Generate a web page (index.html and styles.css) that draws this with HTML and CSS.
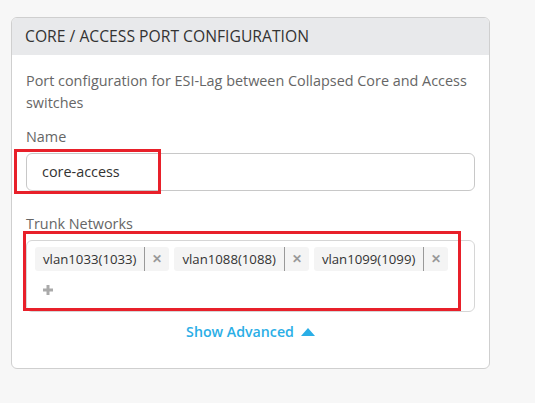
FILE: index.html
```html
<!DOCTYPE html>
<html>
<head>
<meta charset="utf-8">
<link rel="stylesheet" href="styles.css">
</head>
<body>
<div class="card">
  <div class="card-header">CORE / ACCESS PORT CONFIGURATION</div>
  <div class="card-body">
    <p class="desc">Port configuration for ESI-Lag between Collapsed Core and Access switches</p>
    <div class="field">
      <label class="label">Name</label>
      <div class="input-wrap">
        <div class="input">core-access</div>
        <div class="annot annot-name"></div>
      </div>
    </div>
    <div class="field field-trunk">
      <label class="label">Trunk Networks</label>
      <div class="input-wrap">
        <div class="tagbox">
          <div class="tags">
            <span class="tag"><span class="tag-text">vlan1033(1033)</span><span class="tag-x">&#x2715;</span></span>
            <span class="tag"><span class="tag-text">vlan1088(1088)</span><span class="tag-x">&#x2715;</span></span>
            <span class="tag"><span class="tag-text">vlan1099(1099)</span><span class="tag-x">&#x2715;</span></span>
          </div>
          <div class="add">
            <svg width="12" height="12" viewBox="0 0 12 12"><path d="M6 1v10M1 6h10" stroke="#aaa" stroke-width="3"/></svg>
          </div>
        </div>
        <div class="annot annot-trunk"></div>
      </div>
    </div>
    <div class="advanced">
      <span class="adv-link">Show Advanced</span>
      <svg class="adv-caret" width="14" height="8" viewBox="0 0 14 8"><path d="M0 8L7 0L14 8Z" fill="#2aaee6"/></svg>
    </div>
  </div>
</div>
</body>
</html>
```
FILE: styles.css
```css
html, body {
  margin: 0;
  padding: 0;
  background: #f7f7f7;
  font-family: "Open Sans", "Liberation Sans", sans-serif;
}
body {
  padding: 17px 0 0 11px;
}
.card {
  width: 477px;
  border: 1px solid #cfcfcf;
  border-radius: 6px;
  background: #fff;
  overflow: hidden;
}
.card-header {
  background: #e8e9eb;
  height: 37px;
  line-height: 36px;
  padding: 0 13px;
  font-size: 15.7px;
  color: #333;
}
.card-body {
  padding: 15px 14px 26px 14px;
}
.desc {
  margin: 0;
  font-size: 14.4px;
  line-height: 22px;
  color: #666;
}
.field {
  margin-top: 13px;
}
.field-trunk {
  margin-top: 23px;
}
.label {
  display: block;
  font-size: 14.4px;
  line-height: 20px;
  color: #666;
  margin-bottom: 6px;
}
.input-wrap {
  position: relative;
}
.input {
  height: 36px;
  border: 1px solid #c8c8c8;
  border-radius: 6px;
  padding: 0 15px;
  line-height: 36px;
  font-size: 14.4px;
  color: #333;
}
.annot {
  position: absolute;
  border: 3px solid #e8202a;
  box-sizing: border-box;
  pointer-events: none;
}
.annot-name {
  left: -12px;
  top: -4px;
  width: 147px;
  height: 45px;
}
.annot-trunk {
  left: -3px;
  top: -9px;
  width: 438px;
  height: 80px;
}
.tagbox {
  border: 1px solid #d6d6d6;
  border-radius: 6px;
  padding: 6px 8px 0 8px;
  box-sizing: border-box;
  height: 72px;
}
.tags {
  display: flex;
  gap: 5px;
}
.tag {
  display: flex;
  align-items: stretch;
  height: 24px;
  background: #f4f4f4;
  border-radius: 3px;
  font-size: 13.2px;
  color: #333;
}
.tag-text {
  padding: 0 8px 0 8px;
  line-height: 24px;
  border-right: 1px solid #999;
}
.tag-x {
  width: 24px;
  text-align: center;
  line-height: 24px;
  font-size: 12px;
  font-weight: bold;
  color: #999;
}
.add {
  padding: 13px 0 0 7px;
  height: 12px;
}
.add svg {
  display: block;
}
.advanced {
  display: flex;
  justify-content: center;
  align-items: center;
  gap: 7px;
  margin-top: 10px;
  line-height: 20px;
  height: 20px;
}
.adv-link {
  color: #2aaee6;
  font-size: 14.2px;
  font-weight: 600;
}
.adv-caret {
  display: block;
}
```
